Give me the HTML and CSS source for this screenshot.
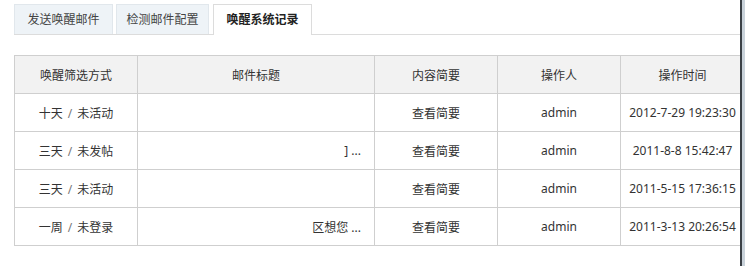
FILE: index.html
```html
<!DOCTYPE html>
<html lang="zh-CN">
<head>
    <meta charset="UTF-8">
    <meta name="viewport" content="width=device-width, initial-scale=1.0">
    <title>唤醒系统记录</title>
    <link rel="stylesheet" href="styles.css">
</head>
<body>
    <div class="frame">
        <div class="tabs">
            <a class="tab">发送唤醒邮件</a>
            <a class="tab narrow">检测邮件配置</a>
            <a class="tab active">唤醒系统记录</a>
        </div>

        <table class="records">
            <colgroup>
                <col class="c-mode">
                <col class="c-title">
                <col class="c-summary">
                <col class="c-user">
                <col class="c-time">
            </colgroup>
            <thead>
                <tr>
                    <th>唤醒筛选方式</th>
                    <th>邮件标题</th>
                    <th>内容简要</th>
                    <th>操作人</th>
                    <th>操作时间</th>
                </tr>
            </thead>
            <tbody>
                <tr>
                    <td>十天 <span class="sep">/</span> 未活动</td>
                    <td class="title"></td>
                    <td>查看简要</td>
                    <td>admin</td>
                    <td>2012-7-29 19:23:30</td>
                </tr>
                <tr>
                    <td>三天 <span class="sep">/</span> 未发帖</td>
                    <td class="title">] ...</td>
                    <td>查看简要</td>
                    <td>admin</td>
                    <td>2011-8-8 15:42:47</td>
                </tr>
                <tr>
                    <td>三天 <span class="sep">/</span> 未活动</td>
                    <td class="title"></td>
                    <td>查看简要</td>
                    <td>admin</td>
                    <td>2011-5-15 17:36:15</td>
                </tr>
                <tr>
                    <td>一周 <span class="sep">/</span> 未登录</td>
                    <td class="title">区想您 ...</td>
                    <td>查看简要</td>
                    <td>admin</td>
                    <td>2011-3-13 20:26:54</td>
                </tr>
            </tbody>
        </table>
    </div>
</body>
</html>
```

FILE: styles.css
```css
html, body {
    margin: 0;
    height: 100%;
}
body {
    background: #c9d2da;
    font-family: "Noto Sans", "Noto Sans CJK SC", sans-serif;
    font-size: 12px;
    color: #333;
}
.frame {
    box-sizing: border-box;
    width: 742px;
    height: 266px;
    padding: 4px 0 0 14px;
    background: #fff;
    border-right: 2px solid #3b4046;
    overflow: hidden;
}
.tabs {
    display: flex;
    gap: 3px;
    height: 30px;
    border-bottom: 1px solid #dcdcdc;
}
.tab {
    display: block;
    box-sizing: border-box;
    width: 99px;
    height: 30px;
    line-height: 29px;
    text-align: center;
    background: #eef3f7;
    border: 1px solid #e1e7ec;
    border-bottom: none;
    color: #444;
}
.tab.narrow {
    width: 93px;
}
.tab.active {
    height: 31px;
    margin-left: 1px;
    background: #fff;
    border-color: #dcdcdc;
    font-weight: bold;
    color: #222;
}
.records {
    margin-top: 20px;
    width: 730px;
    border-collapse: collapse;
    table-layout: fixed;
}
.c-mode { width: 123px; }
.c-title { width: 237px; }
.c-summary { width: 123px; }
.c-user { width: 123px; }
.c-time { width: 124px; }
.records th,
.records td {
    height: 37px;
    padding: 0 4px;
    border: 1px solid #cfcfcf;
    text-align: center;
    font-weight: normal;
    white-space: nowrap;
}
.records th {
    background: #f2f2f2;
}
.records td.title {
    text-align: right;
    padding-right: 13px;
}
.sep {
    padding: 0 2px;
    color: #777;
}
```
